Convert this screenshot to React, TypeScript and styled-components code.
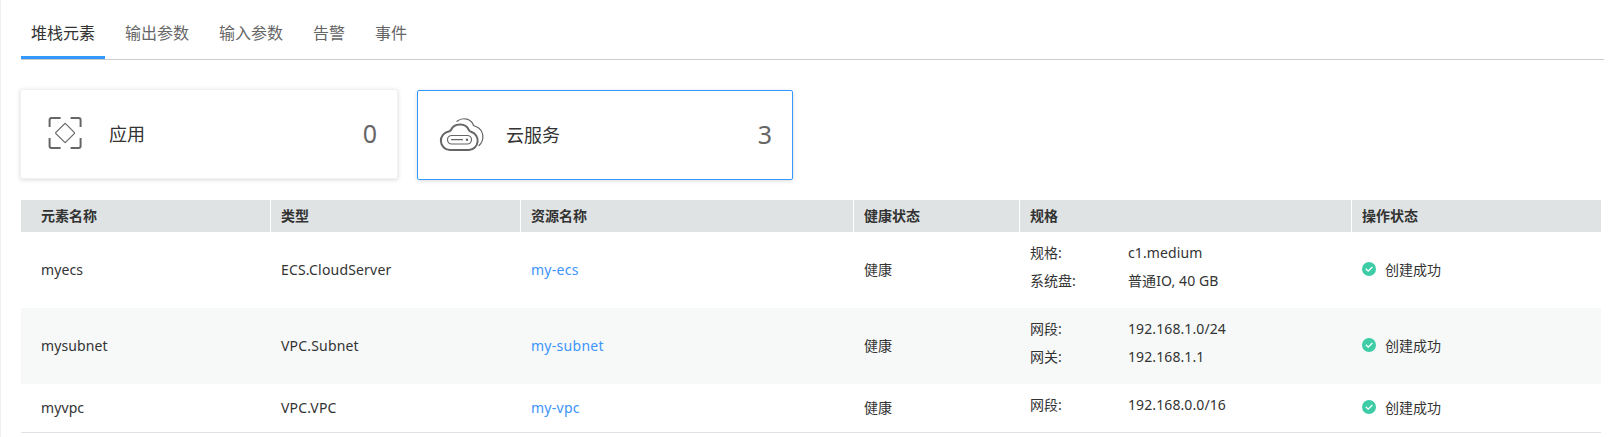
import React from "react";
import styled, { createGlobalStyle } from "styled-components";

const GlobalStyle = createGlobalStyle`
  *, *::before, *::after { box-sizing: border-box; }
  body {
    margin: 0;
    background: #fff;
    color: #333;
    font-family: "Noto Sans", "Noto Sans CJK SC", sans-serif;
    font-size: 14px;
  }
`;

const Page = styled.main`
  height: 437px;
  overflow: hidden;
  padding: 9px 4px 0 20px;
  border-left: 1px solid #efefef;
`;

const TabBar = styled.nav`
  display: flex;
  gap: 10px;
  height: 51px;
  border-bottom: 1px solid #ccc;
`;

const Tab = styled.button<{ $active?: boolean }>`
  height: 50px;
  padding: 0 10px;
  border: 0;
  border-bottom: 3px solid ${(p) => (p.$active ? "#3399ff" : "transparent")};
  background: none;
  color: ${(p) => (p.$active ? "#333" : "#666")};
  font-family: "Noto Sans CJK SC", sans-serif;
  font-size: 16px;
  line-height: 47px;
`;

const Cards = styled.div`
  display: flex;
  gap: 19px;
  margin: 29px 0 0 -1px;
`;

const Card = styled.section<{ $selected?: boolean }>`
  display: flex;
  align-items: center;
  width: ${(p) => (p.$selected ? 376 : 378)}px;
  height: 90px;
  margin-top: ${(p) => (p.$selected ? 1 : 0)}px;
  padding: 0 20px 2px 21px;
  border: 1px solid ${(p) => (p.$selected ? "#3399ff" : "#f1f1f1")};
  border-radius: 2px;
  box-shadow: 0 1px 4px rgba(0, 0, 0, 0.15);
`;

const CardIcon = styled.span`
  display: flex;
  width: 67px;
`;

const CardTitle = styled.span`
  flex: 1;
  font-size: 18px;
`;

const CardCount = styled.span`
  color: #666;
  font-size: 25px;
`;

const Table = styled.div`
  width: 1580px;
  margin-top: 20px;
  border-bottom: 1px solid #dfe1e6;
`;

const Row = styled.div<{ $height: number; $shaded?: boolean }>`
  display: grid;
  grid-template-columns: 250px 250px 333px 166px 332px 249px;
  height: ${(p) => p.$height}px;
  background: ${(p) => (p.$shaded ? "#f7f9f9" : "#fff")};
`;

const HeadCell = styled.div`
  display: flex;
  align-items: center;
  padding: 0 0 2px 10px;
  border-right: 1px solid #fff;
  background: #dfe3e4;
  font-weight: 700;
  &:first-child { padding-left: 20px; }
  &:last-child { border-right: 0; }
`;

const Cell = styled.div<{ $latin?: boolean }>`
  display: flex;
  align-items: center;
  padding: 0 0 2px 10px;
  letter-spacing: ${(p) => (p.$latin ? "0.18px" : "normal")};
  &:first-child {
    padding-left: 20px;
    letter-spacing: 0.1px;
  }
`;

const Link = styled.a`
  color: #3d94f9;
  letter-spacing: 0.28px;
`;

const Specs = styled.dl`
  margin: 0;
  padding: 7px 0 0 10px;
  display: grid;
  grid-template-columns: 98px 1fr;
  grid-auto-rows: 28px;
  line-height: 28px;
`;

const SpecName = styled.dt``;

const SpecValue = styled.dd`
  margin: 0;
  letter-spacing: 0.1px;
`;

const Status = styled.span`
  display: flex;
  align-items: center;
  gap: 9px;
`;

const AppIcon = () => (
  <svg width="44" height="34" viewBox="-0.6 0 44 34" fill="none" stroke="#666">
    <path d="M7 11V4q0-2 2-2h9M28 2h8q2 0 2 2v7M7 22v8q0 2 2 2h9M28 32h8q2 0 2-2v-8" strokeWidth="2" />
    <path d="M21.9 7.800q.6-.6 1.200 0l8.600 8.600q.6.6 0 1.200l-8.600 8.600q-.6.6-1.200 0l-8.600-8.600q-.6-.6 0-1.200z" strokeWidth="1.200" />
  </svg>
);

const CloudIcon = () => (
  <svg width="46" height="34" viewBox="0 0 46 34" fill="none" stroke="#666" strokeLinecap="round">
    <path d="M11 33a9.300 9.300 0 0 1-1.200-18.500q1-.1 2.200-1.500a9.500 8.300 0 0 1 18 .3q.7 1.200 2 1.500A9.300 9.300 0 0 1 30 33z" strokeWidth="2" />
    <path d="M18 4.300C24-.5 32.500 2 34.500 8.500q1.500.7 3 1.200c7.500 3.500 8.500 13.500 2.500 18.800" strokeWidth="1.200" />
    <rect x="8.500" y="18.500" width="24" height="8.500" rx="4.250" strokeWidth="1.200" />
    <path d="M12.500 22.700h11" strokeWidth="1.200" />
    <circle cx="28" cy="22.700" r="1.200" fill="#666" stroke="none" />
  </svg>
);

const CheckIcon = () => (
  <svg width="14" height="14" viewBox="0 0 14 14">
    <circle cx="7" cy="7" r="7" fill="#3dcca6" />
    <path d="M3.800 6.800l2.400 2.400 4.200-4.200" fill="none" stroke="#fff" strokeWidth="1.300" />
  </svg>
);

const tabs = ["堆栈元素", "输出参数", "输入参数", "告警", "事件"];
const headings = ["元素名称", "类型", "资源名称", "健康状态", "规格", "操作状态"];

interface Resource {
  name: string;
  type: string;
  resource: string;
  height: number;
  specs: [string, string][];
}

const resources: Resource[] = [
  { name: "myecs", type: "ECS.CloudServer", resource: "my-ecs", height: 76, specs: [["规格:", "c1.medium"], ["系统盘:", "普通IO, 40 GB"]] },
  { name: "mysubnet", type: "VPC.Subnet", resource: "my-subnet", height: 76, specs: [["网段:", "192.168.1.0/24"], ["网关:", "192.168.1.1"]] },
  { name: "myvpc", type: "VPC.VPC", resource: "my-vpc", height: 48, specs: [["网段:", "192.168.0.0/16"]] },
];

export default function App() {
  return (
    <>
      <GlobalStyle />
      <Page>
        <TabBar>
          {tabs.map((t, i) => <Tab key={t} $active={i === 0}>{t}</Tab>)}
        </TabBar>
        <Cards>
          <Card>
            <CardIcon><AppIcon /></CardIcon>
            <CardTitle>应用</CardTitle>
            <CardCount>0</CardCount>
          </Card>
          <Card $selected>
            <CardIcon><CloudIcon /></CardIcon>
            <CardTitle>云服务</CardTitle>
            <CardCount>3</CardCount>
          </Card>
        </Cards>
        <Table>
          <Row $height={32}>
            {headings.map((h) => <HeadCell key={h}>{h}</HeadCell>)}
          </Row>
          {resources.map((r, i) => (
            <Row key={r.name} $height={r.height} $shaded={i % 2 === 1}>
              <Cell $latin>{r.name}</Cell>
              <Cell $latin>{r.type}</Cell>
              <Cell $latin><Link>{r.resource}</Link></Cell>
              <Cell>健康</Cell>
              <Specs>
                {r.specs.map(([name, value]) => (
                  <React.Fragment key={name}>
                    <SpecName>{name}</SpecName>
                    <SpecValue>{value}</SpecValue>
                  </React.Fragment>
                ))}
              </Specs>
              <Cell><Status><CheckIcon />创建成功</Status></Cell>
            </Row>
          ))}
        </Table>
      </Page>
    </>
  );
}
